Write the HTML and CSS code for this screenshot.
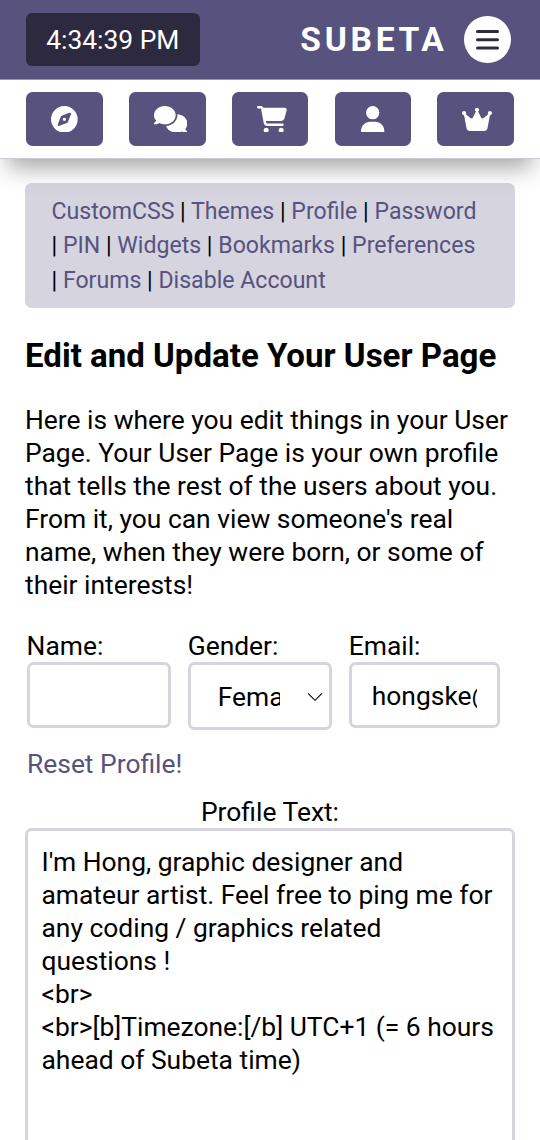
FILE: index.html
```html
<!DOCTYPE html>
<html lang="en">
<head>
<meta charset="utf-8">
<title>Subeta</title>
<link rel="stylesheet" href="styles.css">
</head>
<body>
<header class="site-header">
  <div class="topbar">
    <div class="clock">4:34:39 PM</div>
    <div class="brand">SUBETA</div>
    <button class="menu" aria-label="Menu"><svg viewBox="0 0 24 20"><path d="M1.5 1.5h20M1.5 9.8h20M1.5 18h20"/></svg></button>
  </div>
  <nav class="quick">
    <a class="quick-btn"><span class="icon"><svg style="width:26.7px" viewBox="0 0 512 512"><path d="M256 512A256 256 0 1 0 256 0a256 256 0 1 0 0 512zm50.7-186.9L162.4 380.6c-19.4 7.5-38.5-11.6-31-31l55.5-144.3c3.3-8.5 9.9-15.1 18.4-18.4l144.3-55.5c19.4-7.5 38.5 11.6 31 31L325.1 306.7c-3.2 8.5-9.9 15.1-18.4 18.4zM288 256a32 32 0 1 0 -64 0 32 32 0 1 0 64 0z"/></svg></span></a>
    <a class="quick-btn"><span class="icon"><svg style="width:33.4px" viewBox="0 0 640 512"><path d="M208 352c114.9 0 208-78.8 208-176S322.9 0 208 0S0 78.8 0 176c0 38.6 14.7 74.3 39.6 103.4c-3.5 9.4-8.7 17.7-14.2 24.7c-4.8 6.2-9.7 11-13.3 14.3c-1.8 1.6-3.3 2.9-4.3 3.7c-.5 .4-.9 .7-1.1 .8l-.2 .2C1 327.2-1.4 334.4 .8 340.9S9.1 352 16 352c21.8 0 43.8-5.6 62.1-12.5c9.2-3.5 17.8-7.4 25.3-11.4C134.1 343.3 169.8 352 208 352zM448 176c0 112.3-99.1 196.9-216.5 207C255.8 457.4 336.4 512 432 512c38.2 0 73.9-8.7 104.7-23.9c7.5 4 16 7.9 25.2 11.4c18.3 6.9 40.3 12.5 62.1 12.5c6.9 0 13.1-4.5 15.2-11.1c2.1-6.6-.2-13.8-5.8-17.9l-.2-.2c-.2-.2-.6-.4-1.1-.8c-1-.8-2.5-2-4.3-3.7c-3.6-3.3-8.5-8.1-13.3-14.3c-5.5-7-10.7-15.4-14.2-24.7c24.9-29 39.6-64.7 39.6-103.4c0-92.8-84.9-168.9-192.6-175.5c.4 5.1 .6 10.3 .6 15.5z"/></svg></span></a>
    <a class="quick-btn"><span class="icon"><svg style="width:30px" viewBox="0 0 576 512"><path d="M0 24C0 10.7 10.7 0 24 0H69.5c22 0 41.5 12.8 50.6 32h411c26.3 0 45.5 25 38.6 50.4l-41 152.3c-8.5 31.4-37 53.3-69.5 53.3H170.7l5.4 28.5c2.2 11.3 12.1 19.5 23.6 19.5H488c13.3 0 24 10.7 24 24s-10.7 24-24 24H199.7c-34.6 0-64.3-24.6-70.7-58.5L77.4 54.5c-.7-3.8-4-6.5-7.9-6.5H24C10.7 48 0 37.3 0 24zM128 464a48 48 0 1 1 96 0 48 48 0 1 1 -96 0zm336-48a48 48 0 1 1 0 96 48 48 0 1 1 0-96z"/></svg></span></a>
    <a class="quick-btn"><span class="icon"><svg class="centered" style="width:23.4px" viewBox="0 0 448 512"><path d="M224 256A128 128 0 1 0 224 0a128 128 0 1 0 0 256zm-45.7 48C79.8 304 0 383.8 0 482.3C0 498.7 13.3 512 29.7 512H418.3c16.4 0 29.7-13.3 29.7-29.7C448 383.8 368.2 304 269.7 304H178.3z"/></svg></span></a>
    <a class="quick-btn"><span class="icon"><svg style="width:30px" viewBox="0 0 576 512"><path d="M309 106c11.4-7 19-19.7 19-34c0-22.1-17.9-40-40-40s-40 17.9-40 40c0 14.4 7.6 27 19 34L209.7 220.6c-9.1 18.2-32.7 23.4-48.6 10.7L72 160c5-6.7 8-15 8-24c0-22.1-17.9-40-40-40S0 113.9 0 136s17.9 40 40 40c.2 0 .5 0 .7 0L86.4 427.4c5.5 30.4 32 52.6 63 52.6H426.6c30.9 0 57.4-22.1 63-52.6L535.3 176c.2 0 .5 0 .7 0c22.1 0 40-17.9 40-40s-17.9-40-40-40s-40 17.9-40 40c0 9 3 17.3 8 24l-89.1 71.3c-15.9 12.7-39.5 7.5-48.6-10.7L309 106z"/></svg></span></a>
  </nav>
</header>
<main class="content">
  <nav class="settings"><a>CustomCSS</a> | <a>Themes</a> | <a>Profile</a> | <a>Password</a><br>| <a>PIN</a> | <a>Widgets</a> | <a>Bookmarks</a> | <a>Preferences</a><br>| <a>Forums</a> | <a>Disable Account</a></nav>
  <h1 class="title">Edit and Update Your User Page</h1>
  <p class="intro">Here is where you edit things in your User<br>Page. Your User Page is your own profile<br>that tells the rest of the users about you.<br>From it, you can view someone's real<br>name, when they were born, or some of<br>their interests!</p>
  <div class="fields">
    <div class="field"><span class="label">Name:</span><div class="box"></div></div>
    <div class="field"><span class="label">Gender:</span><div class="box select"><span class="value">Female</span><svg class="chevron" viewBox="0 0 16 10"><path d="M1 1.3 8 8.3 15 1.3"/></svg></div></div>
    <div class="field"><span class="label">Email:</span><div class="box email"><span class="value">hongske@</span></div></div>
  </div>
  <a class="reset">Reset Profile!</a>
  <div class="text-label">Profile Text:</div>
  <div class="textarea">I'm Hong, graphic designer and<br>amateur artist. Feel free to ping me for<br>any coding / graphics related<br>questions !<br>&lt;br&gt;<br>&lt;br&gt;[b]Timezone:[/b] UTC+1 (= 6 hours<br>ahead of Subeta time)</div>
</main>
</body>
</html>
```
FILE: styles.css
```css
* { box-sizing: border-box; }
body {
  margin: 0;
  height: 1140px;
  overflow: hidden;
  background: #fff;
  color: #000;
  font: 26.4px/33px Roboto, sans-serif;
  white-space: nowrap;
}
.site-header {
  height: 159px;
  background: #fff;
  border-bottom: 1px solid #cbcad6;
  box-shadow: 0 17px 22px -8px rgba(0, 0, 0, 0.35);
}
.topbar {
  display: flex;
  align-items: center;
  height: 80px;
  padding: 0 29px 0 26px;
  background: #57527e;
  border-bottom: 1px solid #9a97b2;
  color: #fff;
}
.clock {
  width: 173.5px;
  height: 53px;
  border-radius: 6px;
  background: #2d293f;
  text-align: center;
  line-height: 54px;
}
.brand {
  margin-left: auto;
  font-size: 33.6px;
  font-weight: 700;
  letter-spacing: 3.7px;
}
.menu {
  display: flex;
  align-items: center;
  justify-content: center;
  width: 46.7px;
  height: 46.7px;
  margin-left: 16.7px;
  padding: 0;
  border: 0;
  border-radius: 50%;
  background: #fff;
}
.menu svg {
  width: 24px;
  height: 20px;
  fill: none;
  stroke: #2d293f;
  stroke-width: 3;
  stroke-linecap: round;
}
.quick {
  display: flex;
  justify-content: space-between;
  padding: 12.4px 26px 0 26.3px;
}
.quick-btn {
  display: flex;
  align-items: center;
  justify-content: center;
  width: 76.6px;
  height: 53.3px;
  border-radius: 6.5px;
  background: #57527e;
}
.icon {
  display: flex;
  width: 26.7px;
  height: 26.7px;
}
.icon svg {
  flex: none;
  height: 26.7px;
  fill: #fff;
}
.icon .centered { margin: 0 auto; }
.content { padding: 24.4px 25px 0; }
.settings {
  height: 125px;
  padding: 11.2px 26.5px;
  border-radius: 6.5px;
  background: rgba(87, 82, 126, 0.25);
  font-size: 23.1px;
  line-height: 34.67px;
}
.settings a, .reset { color: #57527e; }
.title {
  margin: 28px 0 0;
  font-size: 33.06px;
  font-weight: 700;
  line-height: 40px;
}
.intro { margin: 28px 0 0; }
.fields {
  display: grid;
  grid-template-columns: 144.6px 144.6px 151.2px;
  align-items: start;
  gap: 16.5px;
  margin: 28px 1px 0 1.6px;
}
.label { display: block; }
.box {
  height: 66px;
  margin-top: -1px;
  border: 3px solid #d5d4df;
  border-radius: 6.5px;
  padding: 15px 20px;
}
.select {
  display: flex;
  justify-content: space-between;
  height: 68px;
  padding: 16px 6.5px 0 27px;
}
.value { display: block; overflow: hidden; }
.select .value { width: 62px; }
.chevron {
  width: 16px;
  height: 10px;
  margin-top: 11px;
  fill: none;
  stroke: #000;
  stroke-width: 1.1;
}
.reset { display: block; margin: 18px 2px 0; }
.text-label { margin-top: 15px; text-align: center; }
.textarea {
  height: 360px;
  margin-top: -1px;
  border: 3px solid #d5d4df;
  border-radius: 6.5px;
  padding: 15px 13.5px;
}
```
